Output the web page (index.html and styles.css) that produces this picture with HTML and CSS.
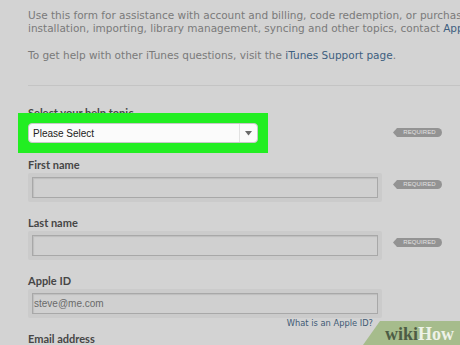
FILE: index.html
```html
<!DOCTYPE html>
<html>
<head>
<meta charset="utf-8">
<link rel="stylesheet" href="styles.css">
</head>
<body>
<div class="page">
  <div class="intro">
    <p>Use this form for assistance with account and billing, code redemption, or purchase<br>installation, importing, library management, syncing and other topics, contact <a class="link">Apple</a></p>
    <p class="second">To get help with other iTunes questions, visit the <a class="link">iTunes Support page</a>.</p>
  </div>
  <div class="rule"></div>
  <div class="label topic">Select your help topic</div>
  <div class="row row-select">
    <div class="highlight">
      <div class="select">
        <span class="select-text">Please Select</span>
        <span class="select-btn"><svg width="7" height="5" viewBox="0 0 7 5"><path d="M0 0H7L3.5 4.5Z" fill="#6a6a6a"/></svg></span>
      </div>
    </div>
    <span class="badge badge-select">REQUIRED</span>
  </div>
  <div class="label first">First name</div>
  <div class="row">
    <div class="halo"><div class="input"></div></div>
    <span class="badge">REQUIRED</span>
  </div>
  <div class="label">Last name</div>
  <div class="row">
    <div class="halo"><div class="input"></div></div>
    <span class="badge">REQUIRED</span>
  </div>
  <div class="label">Apple ID</div>
  <div class="row">
    <div class="halo"><div class="input"><span class="value">steve@me.com</span></div></div>
  </div>
  <div class="help"><a class="link">What is an Apple ID?</a></div>
  <div class="label email">Email address</div>
</div>
<div class="wikihow"><span class="wiki">wiki</span><span class="how">How</span></div>
</body>
</html>
```
FILE: styles.css
```css
html, body {
  margin: 0;
  padding: 0;
  background: #d3d3d3;
  overflow: hidden;
}
body {
  width: 460px;
  height: 345px;
  position: relative;
  font-family: "DejaVu Sans", sans-serif;
}
.page {
  padding: 9px 0 0 28px;
}
.intro p {
  margin: 0;
  font-size: 10.5px;
  line-height: 13px;
  color: #7a7a7a;
  white-space: nowrap;
}
.intro p.second {
  margin-top: 14px;
}
.link {
  color: #3e5f80;
  text-decoration: none;
}
.rule {
  margin-top: 23px;
  height: 1px;
  background: #c4c4c4;
}
.label {
  font-family: "Lato", sans-serif;
  font-size: 11px;
  font-weight: bold;
  line-height: 13px;
  color: #464646;
  margin-top: 14px;
}
.label.topic {
  margin-top: 20px;
}
.label.first {
  margin-top: 5px;
}
.label.email {
  margin-top: 3px;
}
.row {
  display: flex;
  align-items: flex-start;
  margin-top: 2px;
}
.highlight {
  position: relative;
  margin: -8px 0 0 -10px;
  padding: 10px;
  background: #22ee22;
}
.select {
  width: 228px;
  height: 18px;
  border: 1px solid #c8c8c8;
  border-radius: 4px;
  background: #fbfbfb;
  display: flex;
  align-items: center;
}
.select-text {
  flex: 1;
  padding-left: 4px;
  font-family: "Liberation Sans", Arial, sans-serif;
  font-size: 10px;
  color: #222;
}
.select-btn {
  width: 17px;
  height: 18px;
  border-left: 1px solid #e2e2e2;
  display: flex;
  align-items: center;
  justify-content: center;
}
.badge {
  margin-left: 11px;
  margin-top: 7px;
  height: 9px;
  width: 45px;
  padding-left: 4px;
  background: #939393;
  border-radius: 0 5px 5px 0;
  clip-path: polygon(4px 0, 100% 0, 100% 100%, 4px 100%, 0 50%);
  font-family: "Liberation Sans", Arial, sans-serif;
  font-size: 6px;
  line-height: 9px;
  color: #e2e2e2;
  text-align: center;
  letter-spacing: 0.1px;
}
.badge-select {
  margin-left: 125px;
  margin-top: 7px;
}
.halo {
  padding: 4px;
  background: #cbcbcb;
  border-radius: 2px;
}
.input {
  width: 344px;
  height: 19px;
  border: 1px solid #a8a8a8;
  background: #d0d0d0;
  box-shadow: inset 1px 1px 1px #bdbdbd;
  display: flex;
  align-items: center;
}
.value {
  padding-left: 1px;
  font-family: "Liberation Sans", Arial, sans-serif;
  font-size: 10px;
  color: #6a6a6a;
}
.help {
  width: 345px;
  text-align: right;
  font-size: 8.3px;
  line-height: 11px;
}
.help .link {
  color: #405a75;
}
.wikihow {
  position: absolute;
  right: 0;
  bottom: 0;
  width: 97px;
  height: 24px;
  background: #a6bc8c;
  clip-path: polygon(17px 0, 100% 0, 100% 100%, 0 100%);
  box-sizing: border-box;
  padding-left: 22px;
  font-family: "Liberation Serif", serif;
  font-weight: bold;
  font-size: 18px;
  line-height: 26px;
}
.wiki {
  color: #4d5c45;
}
.how {
  color: #eef2e8;
}
```
